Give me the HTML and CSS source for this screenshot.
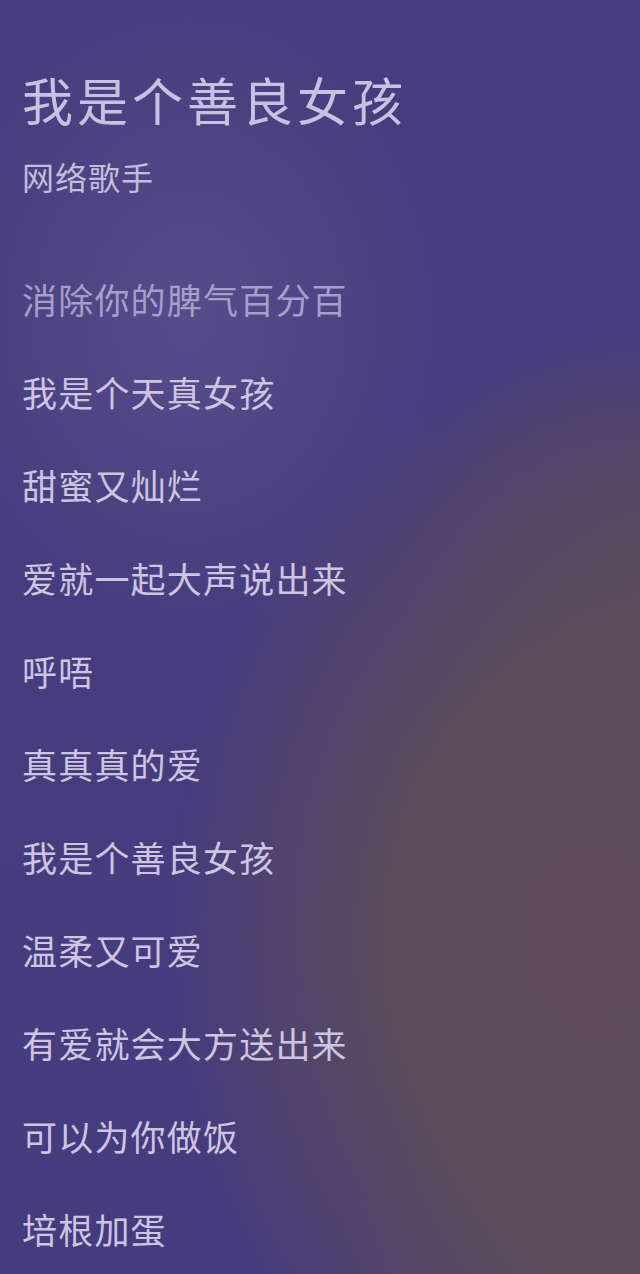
FILE: index.html
```html
<!DOCTYPE html>
<html lang="zh">
<head>
<meta charset="utf-8">
<link rel="stylesheet" href="styles.css">
</head>
<body>
<div class="page">
  <header class="head">
    <h1 class="title">我是个善良女孩</h1>
    <p class="artist">网络歌手</p>
  </header>
  <ul class="lyrics">
    <li class="line past">消除你的脾气百分百</li>
    <li class="line">我是个天真女孩</li>
    <li class="line">甜蜜又灿烂</li>
    <li class="line">爱就一起大声说出来</li>
    <li class="line">呼唔</li>
    <li class="line">真真真的爱</li>
    <li class="line">我是个善良女孩</li>
    <li class="line">温柔又可爱</li>
    <li class="line">有爱就会大方送出来</li>
    <li class="line">可以为你做饭</li>
    <li class="line">培根加蛋</li>
  </ul>
</div>
</body>
</html>
```
FILE: styles.css
```css
html, body {
  margin: 0;
  padding: 0;
}
body {
  width: 640px;
  height: 1274px;
  overflow: hidden;
  font-family: "Noto Sans CJK SC", "Noto Sans", sans-serif;
  background-color: #453b7d;
  background-image:
    radial-gradient(ellipse 260px 320px at 190px 320px, rgba(92, 82, 142, 0.75), rgba(92, 82, 142, 0) 100%),
    radial-gradient(ellipse 420px 580px at 590px 940px, rgba(94, 77, 88, 1) 0%, rgba(94, 77, 88, 0.95) 45%, rgba(94, 77, 88, 0) 100%),
    radial-gradient(ellipse 260px 240px at 660px 560px, rgba(94, 77, 88, 0.7), rgba(94, 77, 88, 0) 100%),
    radial-gradient(ellipse 300px 260px at 640px 1274px, rgba(96, 82, 92, 0.8), rgba(96, 82, 92, 0) 100%),
    linear-gradient(180deg, #473d7e 0%, #453b7d 100%);
}
.page {
  padding: 0 22px;
}
.head {
  padding-top: 66px;
}
.title {
  margin: 0;
  font-weight: 400;
  font-size: 51px;
  line-height: 66px;
  letter-spacing: 4px;
  color: #c9c1e2;
}
.artist {
  margin: 24px 0 0;
  font-size: 32px;
  line-height: 40px;
  letter-spacing: 1px;
  color: #c4bcdc;
}
.lyrics {
  list-style: none;
  margin: 56px 0 0;
  padding: 0;
}
.line {
  font-size: 35px;
  line-height: 93px;
  height: 93px;
  color: #cdc5e2;
  letter-spacing: 1.2px;
}
.line.past {
  color: #a69ecb;
}
```
